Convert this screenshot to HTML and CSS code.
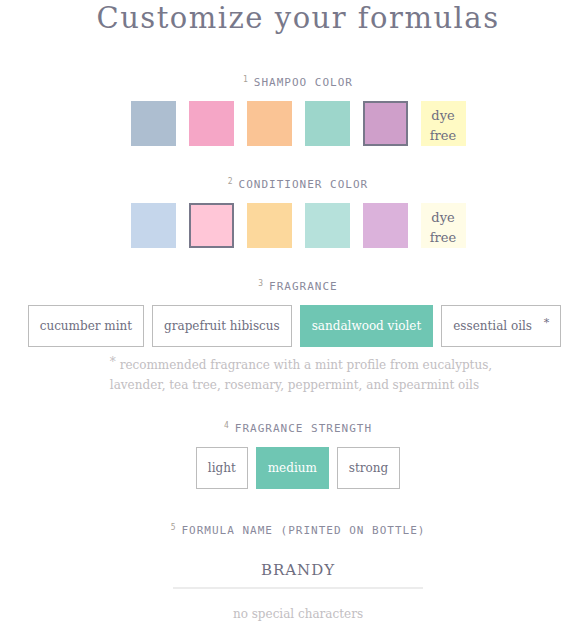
FILE: index.html
```html
<!DOCTYPE html>
<html lang="en">
<head>
    <meta charset="UTF-8">
    <meta name="viewport" content="width=device-width, initial-scale=1.0">
    <title>Customize your formulas</title>
    <link rel="stylesheet" href="styles.css">
</head>
<body>
    <div class="customizer">
        <h1 class="page-title">Customize your formulas</h1>

        <div class="step">
            <div class="step-label"><sup>1</sup>Shampoo color</div>
            <div class="swatches">
                <div class="swatch" style="background:#adbed0"></div>
                <div class="swatch" style="background:#f5a6c6"></div>
                <div class="swatch" style="background:#fac495"></div>
                <div class="swatch" style="background:#9dd6cb"></div>
                <div class="swatch selected" style="background:#cf9fca"></div>
                <div class="swatch dye-free" style="background:#fffac4">dye<br>free</div>
            </div>
        </div>

        <div class="step">
            <div class="step-label"><sup>2</sup>Conditioner color</div>
            <div class="swatches">
                <div class="swatch" style="background:#c5d6eb"></div>
                <div class="swatch selected" style="background:#ffc6d7"></div>
                <div class="swatch" style="background:#fcd89c"></div>
                <div class="swatch" style="background:#b6e1db"></div>
                <div class="swatch" style="background:#dbb2db"></div>
                <div class="swatch dye-free" style="background:#fffce6">dye<br>free</div>
            </div>
        </div>

        <div class="step">
            <div class="step-label"><sup>3</sup>Fragrance</div>
            <div class="options fragrances">
                <button class="option">cucumber mint</button>
                <button class="option">grapefruit hibiscus</button>
                <button class="option active">sandalwood violet</button>
                <button class="option">essential oils <span class="star">*</span></button>
            </div>
            <p class="note"><span class="star">*</span> recommended fragrance with a mint profile from eucalyptus,<br>lavender, tea tree, rosemary, peppermint, and spearmint oils</p>
        </div>

        <div class="step strength">
            <div class="step-label"><sup>4</sup>Fragrance strength</div>
            <div class="options">
                <button class="option">light</button>
                <button class="option active">medium</button>
                <button class="option">strong</button>
            </div>
        </div>

        <div class="step">
            <div class="step-label"><sup>5</sup>Formula name (printed on bottle)</div>
            <input type="text" class="name-input" value="BRANDY">
            <p class="hint">no special characters</p>
        </div>
    </div>
</body>
</html>
```

FILE: styles.css
```css
* {
    margin: 0;
    padding: 0;
    box-sizing: border-box;
}

body {
    font-family: "DejaVu Serif", Georgia, serif;
    color: #6e6e80;
    background: white;
}

.customizer {
    padding-left: 10px;
    display: flex;
    flex-direction: column;
    align-items: center;
}

.page-title {
    font-weight: normal;
    font-size: 29px;
    letter-spacing: 1.5px;
    line-height: 36px;
    color: #78788a;
    margin-bottom: 38px;
}

.step {
    display: flex;
    flex-direction: column;
    align-items: center;
    margin-bottom: 30px;
}

.step.strength {
    margin-bottom: 33px;
}

.step-label {
    font-family: "DejaVu Sans Mono", "Liberation Mono", monospace;
    font-size: 11px;
    line-height: 14px;
    letter-spacing: 1px;
    text-transform: uppercase;
    color: #8a8a9c;
    padding-top: 2px;
    margin-bottom: 11px;
}

.step-label sup {
    font-size: 8px;
    line-height: 0;
    color: #a8a096;
    margin-right: 5px;
    vertical-align: 4px;
}

.swatches {
    display: flex;
    gap: 13px;
}

.swatch {
    width: 45px;
    height: 45px;
}

.swatch.selected {
    border: 2px solid #78788a;
}

.dye-free {
    font-size: 13px;
    line-height: 20px;
    text-align: center;
    padding-top: 5px;
    color: #6e6e80;
}

.options {
    display: flex;
    gap: 8px;
}

.fragrances {
    margin-right: 7px;
}

.option {
    font-family: "DejaVu Serif", Georgia, serif;
    font-size: 12px;
    height: 42px;
    padding: 0 11px;
    border: 1px solid #bcbcbc;
    background: white;
    color: #6e6e80;
    cursor: pointer;
}

.option.active {
    background: #6fc6b3;
    border-color: #6fc6b3;
    color: white;
}

.option .star {
    margin-left: 8px;
    vertical-align: 4px;
    font-size: 11px;
    line-height: 0;
}

.note {
    margin-top: 8px;
    margin-left: 6px;
    font-size: 12px;
    line-height: 20px;
    color: #c2bec2;
    text-align: left;
    margin-bottom: -5px;
}

.note .star {
    vertical-align: 3px;
    line-height: 0;
}

.name-input {
    width: 250px;
    margin-top: 8px;
    border: none;
    border-bottom: 2px solid #ececec;
    font-family: "DejaVu Serif", Georgia, serif;
    font-size: 15px;
    letter-spacing: 1px;
    text-align: center;
    color: #6e6e80;
    padding: 4px 0 8px;
    outline: none;
}

.hint {
    margin-top: 18px;
    font-size: 12px;
    color: #c2bec2;
}
```
